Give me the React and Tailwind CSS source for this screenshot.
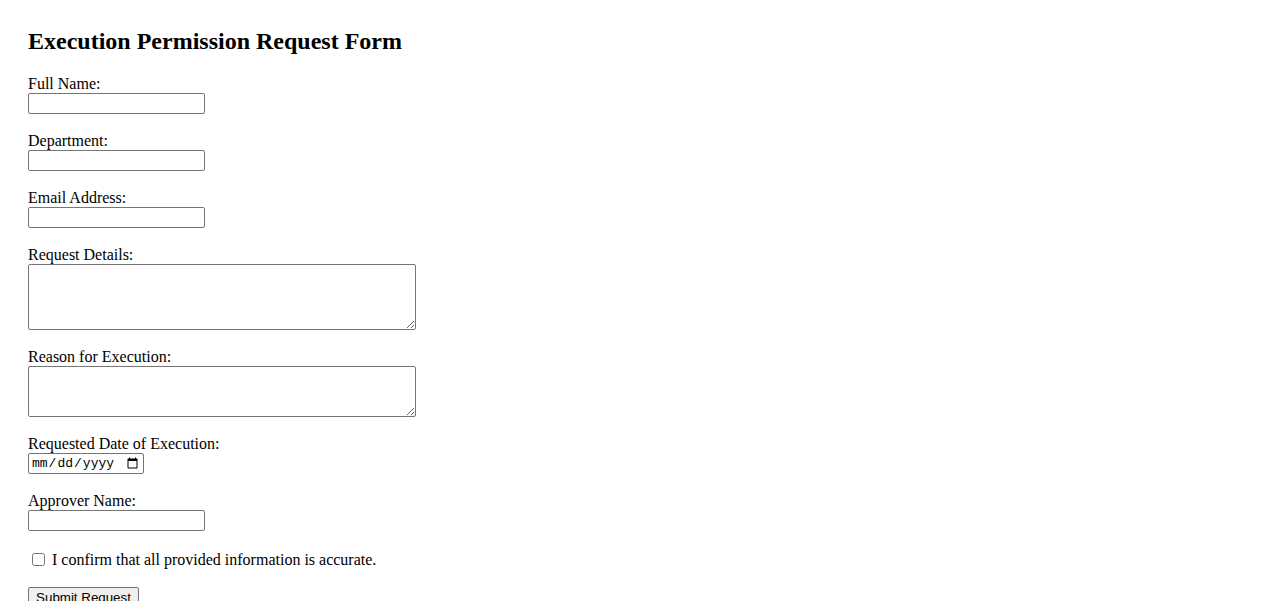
import React from 'react';

const inputBox = 'block border border-[#767676] rounded-[2px] bg-white px-[2px] py-[1px] text-[13.33px] font-["Liberation_Sans",Arial,sans-serif]';

const Field = ({ label, children }) => {
  return (
    <div className="mb-[18px]">
      <label className="block leading-[18px]">{label}</label>
      {children}
    </div>
  );
};

export default function App() {
  return (
    <div className="min-h-screen bg-white text-black p-[28px] text-[16px] font-['Liberation_Serif','Times_New_Roman',serif]">
      <h2 className="text-[24px] font-bold leading-[26px] mb-[21px]">Execution Permission Request Form</h2>
      <form className="flex flex-col items-start" onSubmit={(e) => e.preventDefault()}>
        <Field label="Full Name:">
          <input type="text" className={`${inputBox} w-[177px] h-[21px]`} />
        </Field>
        <Field label="Department:">
          <input type="text" className={`${inputBox} w-[177px] h-[21px]`} />
        </Field>
        <Field label="Email Address:">
          <input type="email" className={`${inputBox} w-[177px] h-[21px]`} />
        </Field>
        <Field label="Request Details:">
          <textarea className={`${inputBox} w-[388px] h-[66px] resize`} />
        </Field>
        <Field label="Reason for Execution:">
          <textarea className={`${inputBox} w-[388px] h-[51px] resize`} />
        </Field>
        <Field label="Requested Date of Execution:">
          <input
            type="date"
            className="block w-[116px] h-[21px] border border-[#767676] rounded-[2px] bg-white px-[2px] py-0 text-[13px] font-['Liberation_Mono',monospace]"
          />
        </Field>
        <Field label="Approver Name:">
          <input type="text" className={`${inputBox} w-[177px] h-[21px]`} />
        </Field>
        <div className="flex items-center h-[20px] leading-[18px]">
          <input type="checkbox" className="m-[3px_3px_3px_4px] w-[13px] h-[13px]" />
          <span className="ml-[4px] pt-[2px]">I confirm that all provided information is accurate.</span>
        </div>
        <button
          type="submit"
          className="mt-[18px] w-[111px] h-[21px] px-[6px] py-[1px] border border-[#767676] rounded-[2px] bg-[#efefef] text-[13.33px] leading-[16px] font-['Liberation_Sans',Arial,sans-serif]"
        >
          Submit Request
        </button>
      </form>
    </div>
  );
}
